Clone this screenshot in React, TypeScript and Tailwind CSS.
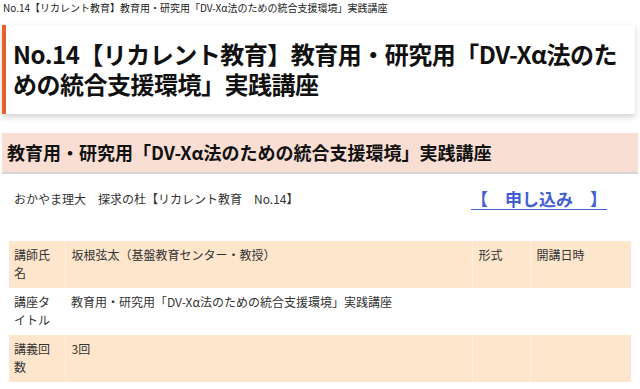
export default function App() {
  const font = { fontFamily: '"Noto Sans CJK JP", "Noto Sans", sans-serif' }

  return (
    <div className="w-[640px] h-[389px] overflow-hidden bg-white text-[#333]" style={font}>
      {/* breadcrumb title */}
      <p className="px-[3px] pt-[1px] text-[10px] leading-[14px] text-[#222]">
        No.14【リカレント教育】教育用・研究用「DV-Xα法のための統合支援環境」実践講座
      </p>

      {/* page heading */}
      <div className="mx-[2px] mt-[10px] border-l-4 border-[#e5622c] bg-white pl-[7px] pr-[2px] pt-[14px] pb-[15px] shadow-[0_3px_6px_rgba(0,0,0,0.18)] w-[633px]">
        <h1 className="text-[24px] leading-[30px] font-bold tracking-[-0.5px] text-[#111]">
          No.14【リカレント教育】教育用・研究用「DV-Xα法のための統合支援環境」実践講座
        </h1>
      </div>

      {/* section heading */}
      <div className="mx-[2px] mt-[19px] bg-[#f9ded3] border-b-2 border-[#d4d4d4] px-[5px] py-[8px]">
        <h2 className="text-[18px] leading-[23px] font-bold text-[#111]">
          教育用・研究用「DV-Xα法のための統合支援環境」実践講座
        </h2>
      </div>

      {/* summary line */}
      <div className="flex items-center justify-between pl-[14px] pr-[33px] mt-[15px]">
        <span className="text-[12px] leading-[18px] text-[#333]">
          おかやま理大　探求の杜【リカレント教育　No.14】
        </span>
        <a className="text-[17px] leading-[20px] font-bold text-[#4360d3] underline underline-offset-[3px] decoration-1">
          【　申し込み　】
        </a>
      </div>

      {/* info table */}
      <table className="ml-[9px] mt-[32px] w-[622px] border-collapse text-[12px] leading-[18px] text-[#333]">
        <colgroup>
          <col className="w-[56px]" />
          <col className="w-[407px]" />
          <col className="w-[58px]" />
          <col />
        </colgroup>
        <tbody>
          <tr className="bg-[#fee6cd]">
            <td className="align-top px-[5px] pt-[5px] pb-[6px] border-r border-[#fdf1e4]">講師氏名</td>
            <td className="align-top px-[6px] pt-[5px] pb-[6px] border-r border-[#fdf1e4]">坂根弦太（基盤教育センター・教授）</td>
            <td className="align-top px-[6px] pt-[5px] pb-[6px] border-r border-[#fdf1e4]">形式</td>
            <td className="align-top px-[6px] pt-[5px] pb-[6px]">開講日時</td>
          </tr>
          <tr className="bg-white">
            <td className="align-top px-[5px] pt-[5px] pb-[6px]">講座タイトル</td>
            <td className="align-top px-[6px] pt-[5px] pb-[6px]">教育用・研究用「DV-Xα法のための統合支援環境」実践講座</td>
            <td className="align-top px-[6px] pt-[5px] pb-[6px]"></td>
            <td className="align-top px-[6px] pt-[5px] pb-[6px]"></td>
          </tr>
          <tr className="bg-[#fee6cd]">
            <td className="align-top px-[5px] pt-[5px] pb-[6px] border-r border-[#fdf1e4]">講義回数</td>
            <td className="align-top px-[6px] pt-[5px] pb-[6px] border-r border-[#fdf1e4]">3回</td>
            <td className="align-top px-[6px] pt-[5px] pb-[6px] border-r border-[#fdf1e4]"></td>
            <td className="align-top px-[6px] pt-[5px] pb-[6px]"></td>
          </tr>
        </tbody>
      </table>
    </div>
  )
}
